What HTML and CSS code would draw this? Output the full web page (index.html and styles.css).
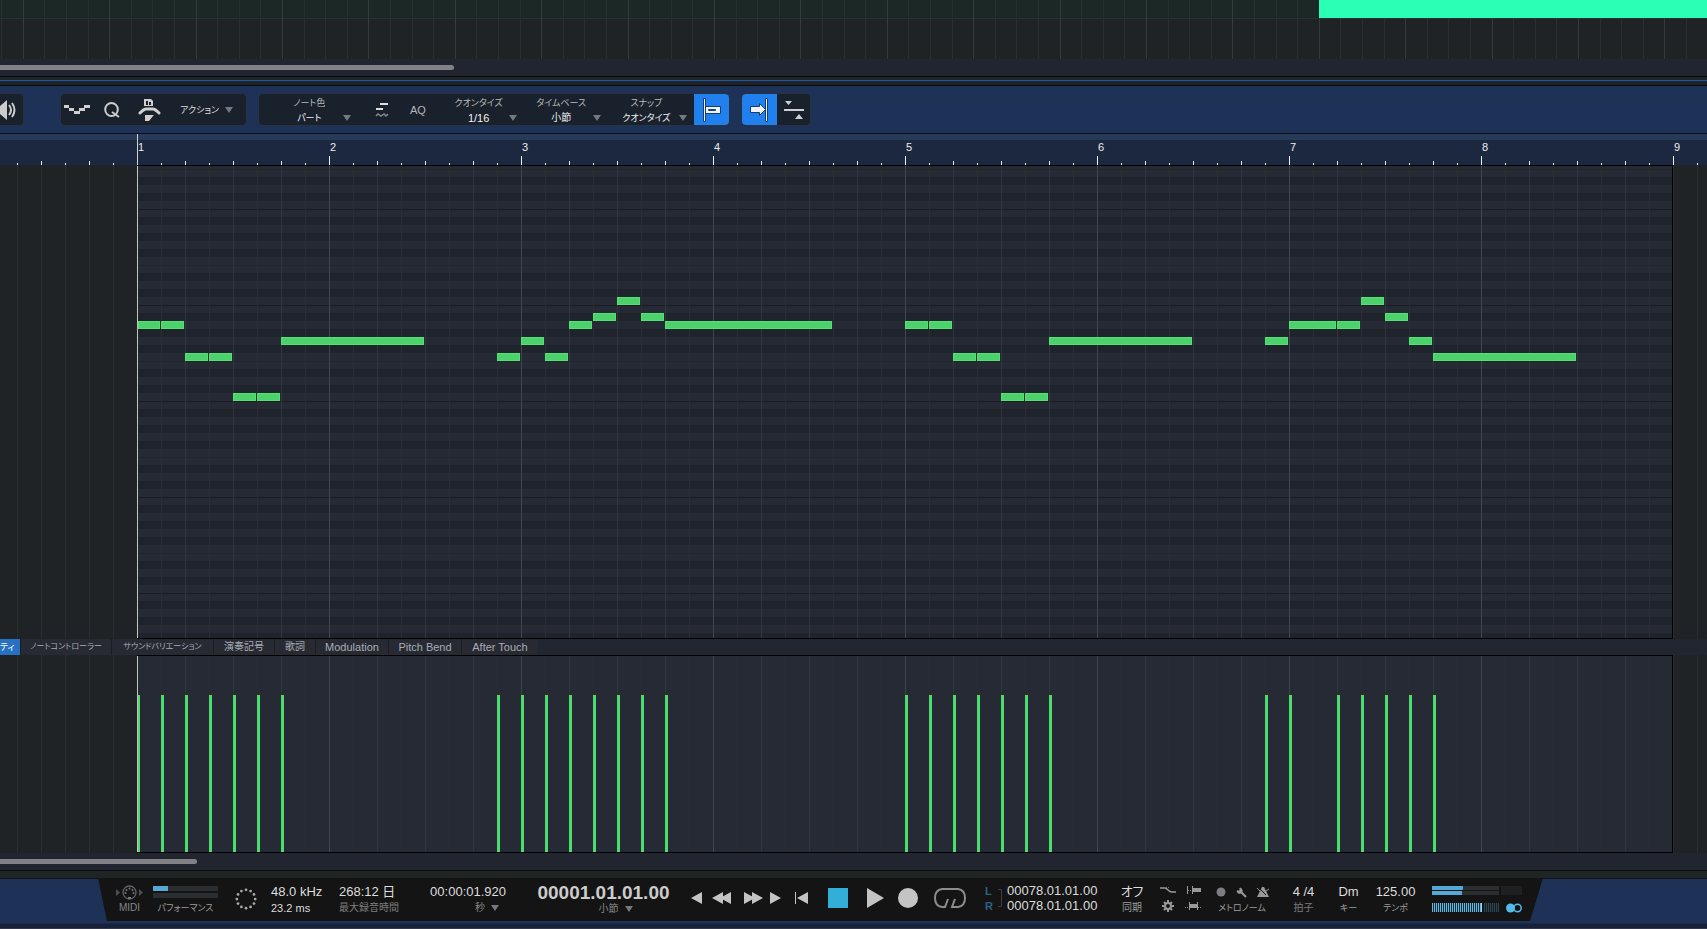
FILE: index.html
```html
<!DOCTYPE html>
<html lang="ja">
<head>
<meta charset="utf-8">
<title>Piano Roll</title>
<link rel="stylesheet" href="styles.css">
</head>
<body>
<section class="arrange" aria-label="Arrangement">
  <svg class="arrange-grid" aria-hidden="true"><path class="beat-lines"/><path class="bar-lines"/></svg>
  <div class="track"><div class="clip"></div></div>
</section>
<div class="scroll-strip"><div class="thumb thumb-long"></div></div>
<div class="splitter"></div>

<header class="toolbar">
  <div class="group group-first">
    <button class="tool tool-speaker" aria-label="Audition"><svg width="18" height="22" viewBox="0 0 18 22"><path fill="#ccc" d="M0 7h1L8 1v20L1 15H0z"/><path fill="none" stroke="#ccc" stroke-width="2" d="M10 6q4 5 0 10M13 4q5 7 0 14"/></svg></button>
  </div>
  <div class="group group-edit">
    <button class="tool tool-wave" aria-label="Curve"><svg width="26" height="10" viewBox="0 0 26 10"><path fill="#d0d0d0" d="M0 0h5v3h5v3h5V3h5V0h6v3h-5v3h-5v3h-6V6H5V3H0z"/></svg></button>
    <button class="tool tool-q" aria-label="Quantize"><svg width="16" height="16" viewBox="0 0 16 16"><ellipse cx="7.500" cy="7.500" rx="6.300" ry="6.500" fill="none" stroke="#ccc" stroke-width="2"/><path stroke="#ccc" stroke-width="2" d="M8 10l7 5"/></svg></button>
    <button class="tool tool-human" aria-label="Humanize"><svg width="24" height="24" viewBox="0 0 24 24"><path fill="#d0d0d0" d="M6 1h7l2 2v5H6zM7 17h9l-1 1-4 5H7z"/><path fill="#1a222d" d="M8 3h2v4H8zM11 4h2v3h-2z"/><path fill="none" stroke="#d0d0d0" stroke-width="3" stroke-linecap="round" d="M2 15q4-4 6-4h7q2 0 6 4"/></svg></button>
    <button class="action">アクション <svg class="caret" viewBox="0 0 8 6"><path d="M0 0h8L4 6z"/></svg></button>
  </div>
  <div class="group group-main">
    <div class="field field-color"><label for="f1">ノート色</label><select id="f1"><option>パート</option></select><svg class="caret" viewBox="0 0 8 6"><path d="M0 0h8L4 6z"/></svg></div>
    <button class="tool tool-steps" aria-label="Swing"><svg width="14" height="16" viewBox="0 0 14 16"><path fill="#ddd" d="M5 1h8v2H5zM1 6h7v2H1z"/><path fill="none" stroke="#888" stroke-width="1.500" d="M1 14l2-2 3 2 3-2 2 2 2-2"/></svg></button>
    <button class="tool tool-aq">AQ</button>
    <div class="field field-quant"><label for="f2">クオンタイズ</label><select id="f2"><option>1/16</option></select><svg class="caret" viewBox="0 0 8 6"><path d="M0 0h8L4 6z"/></svg></div>
    <div class="field field-base"><label for="f3">タイムベース</label><select id="f3"><option>小節</option></select><svg class="caret" viewBox="0 0 8 6"><path d="M0 0h8L4 6z"/></svg></div>
    <div class="field field-snap"><label for="f4">スナップ</label><select id="f4"><option>クオンタイズ</option></select><svg class="caret" viewBox="0 0 8 6"><path d="M0 0h8L4 6z"/></svg></div>
    <button class="tool tool-on" aria-label="Snap" aria-pressed="true"><svg width="20" height="24" viewBox="0 0 20 24"><path fill="#f2f2f2" stroke="#123d75" d="M1.500.5h2v23h-2zM3.500 8.500h15v7h-15z"/><path fill="#1d5fb4" stroke="#17467f" d="M6.500 11.500h7v1h-7z"/></svg></button>
  </div>
  <div class="group">
    <button class="tool tool-on" aria-label="Autoscroll" aria-pressed="true"><svg width="19" height="24" viewBox="0 0 19 24"><path fill="#f2f2f2" stroke="#123d75" d="M15.500.5h2v23h-2zM.5 8.500h9v-3l6 6-6 6v-3h-9z"/></svg></button>
    <button class="tool tool-cursor" aria-label="Cursor"><svg width="20" height="20" viewBox="0 0 20 20"><path fill="#d0d0d0" d="M1 1h7L4.500 5zM0 9h20v2H0zM11 19l4-5 4 5z"/></svg></button>
  </div>
</header>

<div class="ruler"><span>1</span><span>2</span><span>3</span><span>4</span><span>5</span><span>6</span><span>7</span><span>8</span><span>9</span></div>
<main class="roll lane"><div class="part notes"></div></main>
<nav class="tabs" role="tablist">
  <button role="tab" aria-selected="true" class="tab tab-active">ティ</button>
  <button role="tab" class="tab tab-note">ノートコントローラー</button>
  <button role="tab" class="tab tab-sound">サウンドバリエーション</button>
  <button role="tab" class="tab tab-art">演奏記号</button>
  <button role="tab" class="tab tab-lyric">歌詞</button>
  <button role="tab" class="tab tab-mod">Modulation</button>
  <button role="tab" class="tab tab-mod">Pitch Bend</button>
  <button role="tab" class="tab tab-touch">After Touch</button>
</nav>
<section class="velocity lane" aria-label="Velocity"><div class="part bars"></div></section>
<div class="scroll-strip"><div class="thumb thumb-short"></div></div>

<footer class="footer">
  <div class="panel">
    <div class="cell midi">
      <svg width="27" height="15" viewBox="0 0 27 15"><path fill="#4d4f54" d="M0 4l4 3.500L0 11zM23 4l4 3.500-4 3.500z"/><circle cx="13.500" cy="7.500" r="6.500" fill="none" stroke="#606268" stroke-width="1.300"/><g fill="#77797d"><circle cx="9.500" cy="8" r="1"/><circle cx="10.500" cy="5" r="1"/><circle cx="13.500" cy="3.500" r="1"/><circle cx="16.500" cy="5" r="1"/><circle cx="17.500" cy="8" r="1"/><path d="M12 12h3v2h-3z"/></g></svg>
      <span class="note">MIDI</span>
    </div>
    <div class="cell perf">
      <div class="load load-used"></div><div class="load"></div>
      <span class="note kana">パフォーマンス</span>
    </div>
    <div class="cell dots"><svg width="22" height="22" viewBox="0 0 24 24" fill="#aaa"><circle cx="12" cy="2" r="1.500"/><circle cx="17" cy="3.300" r="1.500"/><circle cx="20.700" cy="7" r="1.500"/><circle cx="22" cy="12" r="1.500"/><circle cx="20.700" cy="17" r="1.500"/><circle cx="17" cy="20.700" r="1.500"/><circle cx="12" cy="22" r="1.500"/><circle cx="7" cy="20.700" r="1.500"/><circle cx="3.300" cy="17" r="1.500"/><circle cx="2" cy="12" r="1.500"/><circle cx="3.300" cy="7" r="1.500"/><circle cx="7" cy="3.300" r="1.500"/></svg></div>
    <div class="cell left"><span class="value">48.0 kHz</span><span class="sub">23.2 ms</span></div>
    <div class="cell left"><span class="value">268:12 日</span><span class="note dim">最大録音時間</span></div>
    <div class="cell time"><span class="value">00:00:01.920</span><button class="unit">秒 <svg class="caret" viewBox="0 0 8 6"><path d="M0 0h8L4 6z"/></svg></button></div>
    <div class="cell main-time"><span class="big">00001.01.01.00</span><button class="unit">小節 <svg class="caret" viewBox="0 0 8 6"><path d="M0 0h8L4 6z"/></svg></button></div>
    <div class="transport">
      <button class="step b1" aria-label="Previous"><svg width="11" height="12" viewBox="0 0 11 12"><path d="M11 0v12L0 6z"/></svg></button>
      <button class="step b2" aria-label="Rewind"><svg width="19" height="12" viewBox="0 0 19 12"><path d="M11 0v12L0 6zM19 0v12L8 6z"/></svg></button>
      <button class="step b3" aria-label="Forward"><svg width="19" height="12" viewBox="0 0 19 12"><path d="M0 0v12l11-6zM8 0v12l11-6z"/></svg></button>
      <button class="step b4" aria-label="Next"><svg width="11" height="12" viewBox="0 0 11 12"><path d="M0 0v12l11-6z"/></svg></button>
      <button class="step b5" aria-label="Return to start"><svg width="13" height="12" viewBox="0 0 13 12"><path d="M0 0h1v12H0zM13 0v12L2 6z"/></svg></button>
      <button class="step b6" aria-label="Stop"><svg width="20" height="20" viewBox="0 0 20 20"><path fill="#31afd9" d="M0 0h20v20H0z"/></svg></button>
      <button class="step b7" aria-label="Play"><svg width="17" height="20" viewBox="0 0 17 20"><path d="M0 0l17 10L0 20z"/></svg></button>
      <button class="step b8" aria-label="Record"><svg width="20" height="20" viewBox="0 0 20 20"><circle cx="10" cy="10" r="10"/></svg></button>
      <button class="step b9" aria-label="Loop"><svg width="32" height="21" viewBox="0 0 32 21"><path fill="none" stroke="#8e8e8e" stroke-width="2" d="M14 11l-3 8H8q-7-1-7-9t7-9h16q7 1 7 9t-7 9h-6l3-8"/></svg></button>
    </div>
    <div class="locators">
      <b>L</b><svg class="bracket" width="4" height="18" viewBox="0 0 4 18"><path fill="none" stroke="#3c3f44" d="M0 .5h3.500v17H0"/></svg><span class="value">00078.01.01.00</span>
      <b>R</b><span class="value">00078.01.01.00</span>
    </div>
    <div class="cell sync"><span class="value">オフ</span><span class="note">同期</span></div>
    <div class="icons">
      <svg width="16" height="10" viewBox="0 0 16 10"><path fill="none" stroke="#999" stroke-width="1.500" d="M0 3h5q1 0 3 2t4 2h4"/><path stroke="#777" stroke-dasharray="1 1" d="M6 2.500h4"/></svg>
      <svg width="17" height="10" viewBox="0 0 17 10"><path fill="#999" d="M2 1h1v8H2zM7 1h1v2h8v4H8v2H7z"/><path stroke="#888" stroke-dasharray="1 1" d="M3 5.500h4"/></svg>
      <svg width="12" height="12" viewBox="0 0 12 12"><circle cx="6" cy="6" r="3" fill="none" stroke="#999" stroke-width="2"/><path stroke="#999" stroke-width="2" d="M6 0v2M6 10v2M0 6h2M10 6h2M2 2l1.500 1.500M8.500 8.500L10 10M2 10l1.500-1.500M8.500 3.500L10 2"/></svg>
      <svg width="17" height="10" viewBox="0 0 17 10"><path fill="#999" d="M4 1h1v2h7V1h1v8h-1V7H5v2H4z"/><path stroke="#888" stroke-dasharray="1 1" d="M0 6.500h4M13 6.500h4"/></svg>
    </div>
    <div class="cell metro">
      <div class="metro-icons"><svg width="10" height="10"><circle cx="5" cy="5" r="4.500" fill="#7c7e84"/></svg><svg width="11" height="11" viewBox="0 0 11 11"><path fill="none" stroke="#999" stroke-width="2" d="M1 4l2 1 2-2-1-2M4 4l6 6"/><path fill="#999" d="M5 1l2 3-3 3-3-1 3-2z"/></svg><svg width="12" height="11" viewBox="0 0 12 11"><path fill="#999" d="M5 0h2l5 10H0z"/><path stroke="#141414" d="M2 1l7 7"/><path stroke="#999" d="M0 1l8 8M9 4l3-2"/></svg></div>
      <span class="note kana">メトロノーム</span>
    </div>
    <div class="cell sig"><span class="value">4 /4</span><span class="note dim">拍子</span></div>
    <div class="cell key"><span class="value">Dm</span><span class="note kana">キー</span></div>
    <div class="cell tempo"><span class="value">125.00</span><span class="note kana">テンポ</span></div>
    <div class="meters">
      <div class="level"></div><div class="clip-box"></div><div class="level level-low"></div>
      <div class="ticks"></div>
      <svg class="rings" width="16" height="10" viewBox="0 0 16 10"><circle cx="11.500" cy="5" r="3.700" fill="none" stroke="#55b9e6" stroke-width="1.500"/><circle cx="4.500" cy="5" r="4.500" fill="#55b9e6"/></svg>
    </div>
  </div>
</footer>
<script src="script.js"></script>
</body>
</html>
```
FILE: styles.css
```css
* { box-sizing: border-box; }
body {
  margin: 0;
  height: 100vh;
  display: flex;
  flex-direction: column;
  overflow: hidden;
  background: #1f2325;
  color: #ddd;
  font: 11px/14px "Liberation Sans", "Noto Sans CJK JP", sans-serif;
  font-feature-settings: "palt";
}
button, select {
  margin: 0;
  padding: 0;
  border: 0;
  background: none;
  color: inherit;
  font: inherit;
  font-feature-settings: inherit;
}
svg { display: block; flex: none; }
.caret { width: 8px; height: 6px; fill: #75787c; }

.arrange { position: relative; flex: none; height: 59px; overflow: hidden; }
.arrange-grid { position: absolute; inset: 0; width: 100%; height: 100%; shape-rendering: crispEdges; fill: none; }
.beat-lines { stroke: #2b2e32; }
.bar-lines { stroke: #363940; }
.track { height: 19px; border-bottom: 1px solid #2d3033; background: #10382c40; }
.clip { position: relative; height: 18px; margin-left: 1319px; background: #2bffb5; }

.scroll-strip { flex: none; height: 18px; padding-top: 6px; background: #212530; border-bottom: 1px solid #0b0c0e; }
.thumb { height: 5px; border-radius: 0 3px 3px 0; background: #828286; }
.thumb-long { width: 454px; }
.thumb-short { width: 197px; }
.splitter { flex: none; height: 9px; margin: 0; border-bottom: 1px solid #090b0e; background: linear-gradient(#1f2425 3px, #1f55b0 3px 4px, #1f2425 4px); }

.toolbar { flex: none; display: flex; gap: 12px; height: 48px; padding: 7px 0 8px; background: #1e3258; border-bottom: 1px solid #0a0f1a; }
.group { display: flex; align-items: stretch; height: 33px; border: 1px solid #29323e; border-radius: 5px; background: #19212d; overflow: hidden; }
.group-first { width: 24px; margin-right: 24px; border-left: 0; border-radius: 0 5px 5px 0; }
.group-edit { width: 187px; padding-left: 3px; margin-right: -1px; }
.tool { display: flex; align-items: center; justify-content: center; color: #b8b8b8; }
.tool-speaker { width: 16px; }
.tool-wave { width: 26px; }
.tool-q { width: 44px; }
.tool-human { width: 31px; }
.tool-on { width: 35px; background: #1f80ee; }
.tool-cursor { width: 33px; }
.tool-steps { width: 24px; margin-right: 3px; }
.tool-aq { width: 43px; }
.action { display: flex; align-items: center; gap: 6px; margin-left: 15px; color: #ddd; font-size: 9px; }
.group-main { width: 472px; justify-content: flex-end; margin-right: -1px; }
.field { display: grid; grid-template-columns: 1fr 8px; align-items: center; grid-template-rows: 15px 15px; padding-top: 1px; font-size: 9px; }
.field label { grid-column: 1; justify-self: center; color: #bbb; white-space: nowrap; }
.field select { grid-column: 1; appearance: none; width: 100%; height: 15px; color: #f2f2f2; text-align: center; text-align-last: center; }
.field-color { width: 92px; margin-right: 19px; padding-left: 17px; }
.field-quant { width: 78px; padding-left: 9px; }
.field-base { width: 84px; padding-left: 13px; }
.field-snap { width: 87px; padding-left: 13px; margin-right: 7px; }
.field-quant select { font-size: 11px; }
.field-base select { font-size: 10px; }

.ruler {
  flex: none;
  display: grid;
  grid-template-columns: repeat(9, 192px);
  height: 31px;
  padding: 6px 0 0 138px;
  overflow: hidden;
  color: #eee;
  background:
    linear-gradient(#d0d0d0, #d0d0d0) 137px 0 / 1px 31px no-repeat,
    linear-gradient(90deg, #eee 1px, transparent 1px) 137px 22px / 192px 9px repeat-x,
    linear-gradient(90deg, #eee 1px, transparent 1px) 41px 27px / 48px 4px repeat-x,
    linear-gradient(90deg, #eee 1px, transparent 1px) 17px 29px / 24px 2px repeat-x,
    linear-gradient(#283a5a 6px, #1c2740 6px);
}

.lane {
  overflow: hidden;
  padding-left: 137px;
  background: linear-gradient(90deg, #2a2d30 1px, transparent 1px) 17px 0 / 24px 100%, #1f2325;
}
.roll { flex: 1; min-height: 0; }
.velocity { flex: none; height: 198px; }
.part {
  display: grid;
  grid-template-columns: repeat(64, 24px);
  width: 1536px;
  height: 100%;
  border: solid #000;
  border-width: 1px 1px 1px 0;
  --lines:
    linear-gradient(#c4c4c4, #c4c4c4) 0 0 / 1px 100% no-repeat,
    linear-gradient(90deg, #424550 1px, transparent 1px) 0 0 / 192px 100%,
    linear-gradient(90deg, #31353f 1px, transparent 1px) 0 0 / 48px 100%,
    linear-gradient(90deg, #2b2d33 1px, transparent 1px) 0 0 / 24px 100%;
}
.notes {
  grid-auto-rows: 8px;
  padding-top: 3px;
  background: var(--lines),
    linear-gradient(
      #181a24 1px, #262a35 1px 8px, #1f232c 8px 16px, #262a35 16px 24px,
      #1f232c 24px 32px, #262a35 32px 40px, #1f232c 40px 48px, #262a35 48px 56px,
      #20242d 56px 57px, #262a35 57px 64px, #1f232c 64px 72px, #262a35 72px 80px,
      #1f232c 80px 88px, #262a35 88px 96px) 0 43px / 100% 96px;
}
.note-block { margin-right: 1px; border: 1px solid #50e274; background: #4dd26b; }
.note-block:first-child, .bar:first-child { margin-left: 1px; }
.bars { padding-top: 39px; background: var(--lines), #262a35; }
.bar { width: 3px; background: #4ddb6b; grid-row: 1; }
.bar:first-child { width: 2px; }

.tabs { flex: none; display: flex; height: 16px; background: #212630; color: #a9adb5; font-size: 10px; }
.tab { height: 16px; border-right: 1px solid #1b1d22; background: #272a32; line-height: 14px; white-space: nowrap; }
.tab-active { width: 21px; padding-right: 10px; text-align: right; background: #2870c2; color: #fff; font-size: 9px; }
.tab-note { width: 91px; font-size: 8px; }
.tab-sound { width: 102px; font-size: 8px; }
.tab-art { width: 61px; }
.tab-lyric { width: 41px; }
.tab-mod { width: 73px; font-size: 11px; }
.tab-touch { width: 76px; font-size: 11px; border-right: 0; }

.footer { flex: none; height: 58px; padding: 0 164px 0 98px; border-top: 7px solid #1f2425; border-bottom: 1px solid #33384a; background: linear-gradient(#0d1320 1px, #1e3258 1px 45px, #17213a 46px); }
.panel {
  display: grid;
  grid-template-columns: 37px 82px 36px 68px 92px 106px 154px 294px 137px 38px 55px 76px 48px 37px 56px 1fr;
  height: 43px;
  padding-left: 18px;
  background: #141414;
  clip-path: polygon(0 0, 100% 0, calc(100% - 13px) 100%, 9px 100%);
}
.cell { display: flex; flex-direction: column; align-items: center; padding-top: 6px; white-space: nowrap; }
.left { align-items: flex-start; }
.value { font-size: 13px; line-height: 16px; height: 16px; }
.sub { line-height: 16px; }
.note { font-size: 10px; line-height: 16px; color: #9c9c9c; }
.kana { font-size: 9px; }
.dim { color: #7d7d7d; }
.midi { width: 27px; padding-top: 7px; }
.midi .note { color: #85878a; }
.perf { width: 65px; padding-top: 8px; gap: 2px; }
.load { width: 65px; height: 5px; background: #2b2e30; }
.load-used { background: linear-gradient(90deg, #56a9d4 15px, #2b2e30 15px); }
.dots { align-items: flex-start; padding-top: 10px; }
.time { width: 75px; align-items: flex-end; }
.unit { display: flex; align-items: center; gap: 6px; height: 16px; font-size: 10px; color: #8a8a8a; }
.time .unit { margin-right: 7px; }
.main-time { width: 133px; }
.main-time .unit { margin-left: 24px; }
.big { font-size: 19px; line-height: 17px; font-weight: bold; color: #ccc; }
.transport { display: flex; align-items: center; height: 40px; }
.step { fill: #c4c4c4; }
.b2 { margin-left: 10px; }
.b3 { margin-left: 13px; }
.b4 { margin-left: 7px; }
.b5 { margin-left: 14px; }
.b6 { margin-left: 20px; }
.b7 { margin-left: 19px; }
.b8 { margin-left: 14px; }
.b9 { margin-left: 16px; }
.locators { display: grid; grid-template-columns: 13px 9px 1fr; grid-template-rows: 15px 15px; align-items: center; height: 35px; padding-top: 5px; }
.locators b { font-size: 11px; color: #2d6286; grid-column: 1; }
.locators .bracket { grid-column: 2; grid-row: 1 / 3; }
.locators .value { grid-column: 3; }
.sync { width: 20px; }
.icons { display: grid; grid-template-columns: 16px 17px; grid-template-rows: 16px 16px; column-gap: 9px; place-items: center; height: 38px; padding-top: 4px; }
.metro { width: 54px; }
.metro-icons { display: flex; gap: 10px; height: 16px; align-items: center; }
.sig { width: 25px; }
.key { width: 19px; }
.tempo { width: 39px; }
.meters { display: grid; grid-template-columns: 67px 21px; grid-template-rows: 4px 4px 10px; gap: 1px 2px; padding-top: 8px; align-content: start; }
.level { grid-column: 1; background: linear-gradient(90deg, #56a9d4 31px, #2b2e30 31px); }
.level-low { background: linear-gradient(90deg, #56a9d4 30px, #2b2e30 30px); }
.clip-box { grid-column: 2; grid-row: 1 / 3; background: #1e2124; }
.ticks { grid-column: 1; margin-top: 7px; height: 9px; background: linear-gradient(90deg, transparent 49px, #a5d8f0 49px 50px, #141414 50px 52px, #141414b0 52px), repeating-linear-gradient(90deg, #62b4dd 0 1px, #1b2e38 1px 2px); }
.rings { grid-column: 2; margin: 7px 0 0 5px; }
```
FILE: script.js
```js
// Notes: [start in eighths, length in eighths, pitch row]
const notes = [
  [0, 1, 20], [1, 1, 20], [2, 1, 24], [3, 1, 24], [4, 1, 29], [5, 1, 29], [6, 6, 22],
  [15, 1, 24], [16, 1, 22], [17, 1, 24], [18, 1, 20], [19, 1, 19], [20, 1, 17], [21, 1, 19], [22, 7, 20],
  [32, 1, 20], [33, 1, 20], [34, 1, 24], [35, 1, 24], [36, 1, 29], [37, 1, 29], [38, 6, 22],
  [47, 1, 22], [48, 2, 20], [50, 1, 20], [51, 1, 17], [52, 1, 19], [53, 1, 22], [54, 6, 24]
];
const roll = document.querySelector('.notes');
const bars = document.querySelector('.bars');
for (const [start, length, row] of notes) {
  const block = document.createElement('div');
  block.className = 'note-block';
  block.style.gridArea = `${row} / ${start + 1} / auto / span ${length}`;
  roll.append(block);
  const bar = document.createElement('div');
  bar.className = 'bar';
  bar.style.gridColumn = start + 1;
  bars.append(bar);
}

// Arrangement grid: four beats to a bar
let beats = '';
let measures = '';
for (let i = -1; i < 200; i++) {
  const x = Math.floor(23.2 + i * 21.6) + 0.5;
  if (i % 4 === 0) measures += `M${x} 0V59`;
  else beats += `M${x} 0V59`;
}
document.querySelector('.beat-lines').setAttribute('d', beats);
document.querySelector('.bar-lines').setAttribute('d', measures);
```
